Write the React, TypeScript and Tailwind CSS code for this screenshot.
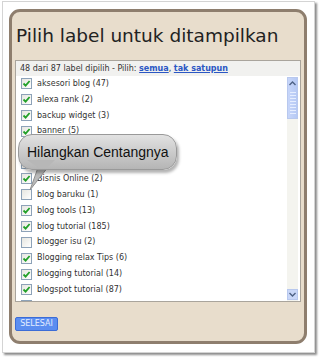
import React from "react";

type Label = { name: string; checked: boolean };

const labels: Label[] = [
    { name: "aksesori blog (47)", checked: true },
    { name: "alexa rank (2)", checked: true },
    { name: "backup widget (3)", checked: true },
    { name: "banner (5)", checked: true },
    { name: "Belajar Blog (4)", checked: false },
    { name: "bisnis (3)", checked: false },
    { name: "Bisnis Online (2)", checked: true },
    { name: "blog baruku (1)", checked: false },
    { name: "blog tools (13)", checked: true },
    { name: "blog tutorial (185)", checked: true },
    { name: "blogger isu (2)", checked: false },
    { name: "Blogging relax Tips (6)", checked: true },
    { name: "blogging tutorial (14)", checked: true },
    { name: "blogspot tutorial (87)", checked: true },
    { name: "blogspot tips (3)", checked: false },
];

const CheckBox: React.FC<{ checked: boolean }> = ({ checked }) => (
    <span className="w-[11px] h-[11px] shrink-0 border border-[#8da2b8] bg-gradient-to-br from-[#e6e6e0] to-white flex items-center justify-center">
        {checked && (
            <svg width="9" height="9" viewBox="0 0 9 9">
                <path d="M1.5 4.5 L3.6 6.6 L7.6 2" fill="none" stroke="#22a028" strokeWidth="1.8" />
            </svg>
        )}
    </span>
);

const ScrollBar: React.FC = () => (
    <div className="w-[11px] h-full bg-[#f4f4ef] flex flex-col justify-between">
        <div className="h-[42px] bg-gradient-to-r from-[#c7d6fa] to-[#b6c9f4] border border-[#b8c8ee] flex flex-col items-center pt-[3px] gap-[2px]">
            <svg width="7" height="5" viewBox="0 0 7 5">
                <path d="M0.5 4 L3.5 1 L6.5 4" fill="none" stroke="#4d6185" strokeWidth="1.4" />
            </svg>
            <div className="mt-[4px] flex flex-col gap-[2px]">
                {[0, 1, 2, 3, 4, 5, 6, 7].map((i) => (
                    <div key={i} className="w-[6px] h-px bg-[#e6eeff]" />
                ))}
            </div>
        </div>
        <div className="h-[11px] mb-[1px] bg-[#c9d7f8] border border-[#b8c8ee] flex items-center justify-center">
            <svg width="7" height="5" viewBox="0 0 7 5">
                <path d="M0.5 1 L3.5 4 L6.5 1" fill="none" stroke="#4d6185" strokeWidth="1.4" />
            </svg>
        </div>
    </div>
);

const App: React.FC = () => {
    return (
        <div className="w-[320px] h-[358px] bg-white relative overflow-hidden pl-[2px] pt-px font-['DejaVu_Sans',sans-serif]">
            <div className="w-[313px] h-[352px] bg-white border border-[#d4d4d4] shadow-[2px_2px_2px_rgba(0,0,0,0.45)] pl-[6px] pt-[7px]">
                <div className="w-[298px] h-[335px] rounded-[11px] border-[3px] border-[#8e7e6e] bg-[#e8ddcc] pl-[3px] pt-[13px]">
                    <h1 className="text-[18.5px] leading-[22px] text-[#222] pl-[1px]">Pilih label untuk ditampilkan</h1>

                    <div className="mt-[13px] w-[286px] h-[242px] border border-[#a9a49c] bg-white flex flex-col">
                        <div className="h-[15px] bg-[#f1f1ef] flex items-center pl-[4px] text-[8px] text-[#333] whitespace-nowrap">
                            48 dari 87 label dipilih - Pilih:&nbsp;
                            <a className="text-[#2b57c4] font-bold underline">semua</a>,&nbsp;
                            <a className="text-[#2b57c4] font-bold underline">tak satupun</a>
                        </div>
                        <div className="flex-1 flex min-h-0">
                            <div className="flex-1 overflow-hidden">
                                {labels.map((l) => (
                                    <div key={l.name} className="h-[15.85px] flex items-center gap-[5px] pl-[5px] text-[8px] text-[#333] whitespace-nowrap">
                                        <CheckBox checked={l.checked} />
                                        <span>{l.name}</span>
                                    </div>
                                ))}
                            </div>
                            <div className="pr-[2px] pt-px">
                                <ScrollBar />
                            </div>
                        </div>
                    </div>

                    <button className="mt-[15px] w-[43px] h-[14px] bg-[#5b8df0] border border-[#3c6cd6] rounded-[2px] text-[8px] text-[#e4eeff] leading-none flex items-center justify-center">
                        SELESAI
                    </button>
                </div>
            </div>

            <div className="absolute left-[18px] top-[134px]">
                <svg className="absolute left-[8px] top-[28px]" width="30" height="30" viewBox="0 0 30 30">
                    <path d="M14 0 L4 28 L26 0 Z" fill="#b9b9b9" stroke="#8f8f8f" strokeWidth="1" />
                </svg>
                <div className="relative w-[159px] h-[36px] rounded-[14px] border border-[#999] bg-gradient-to-b from-[#e2e2e2] to-[#b5b5b5] shadow-[2px_3px_3px_rgba(0,0,0,0.3)] flex items-center pl-[8px] font-['Liberation_Sans',Arial,sans-serif] text-[14px] text-[#111]">
                    Hilangkan Centangnya
                </div>
                <svg className="absolute left-[9px] top-[26px]" width="28" height="8" viewBox="0 0 28 8">
                    <path d="M0 0 L28 0 L20 8 L12 8 Z" fill="#b7b7b7" />
                </svg>
            </div>
        </div>
    );
};

export default App;
